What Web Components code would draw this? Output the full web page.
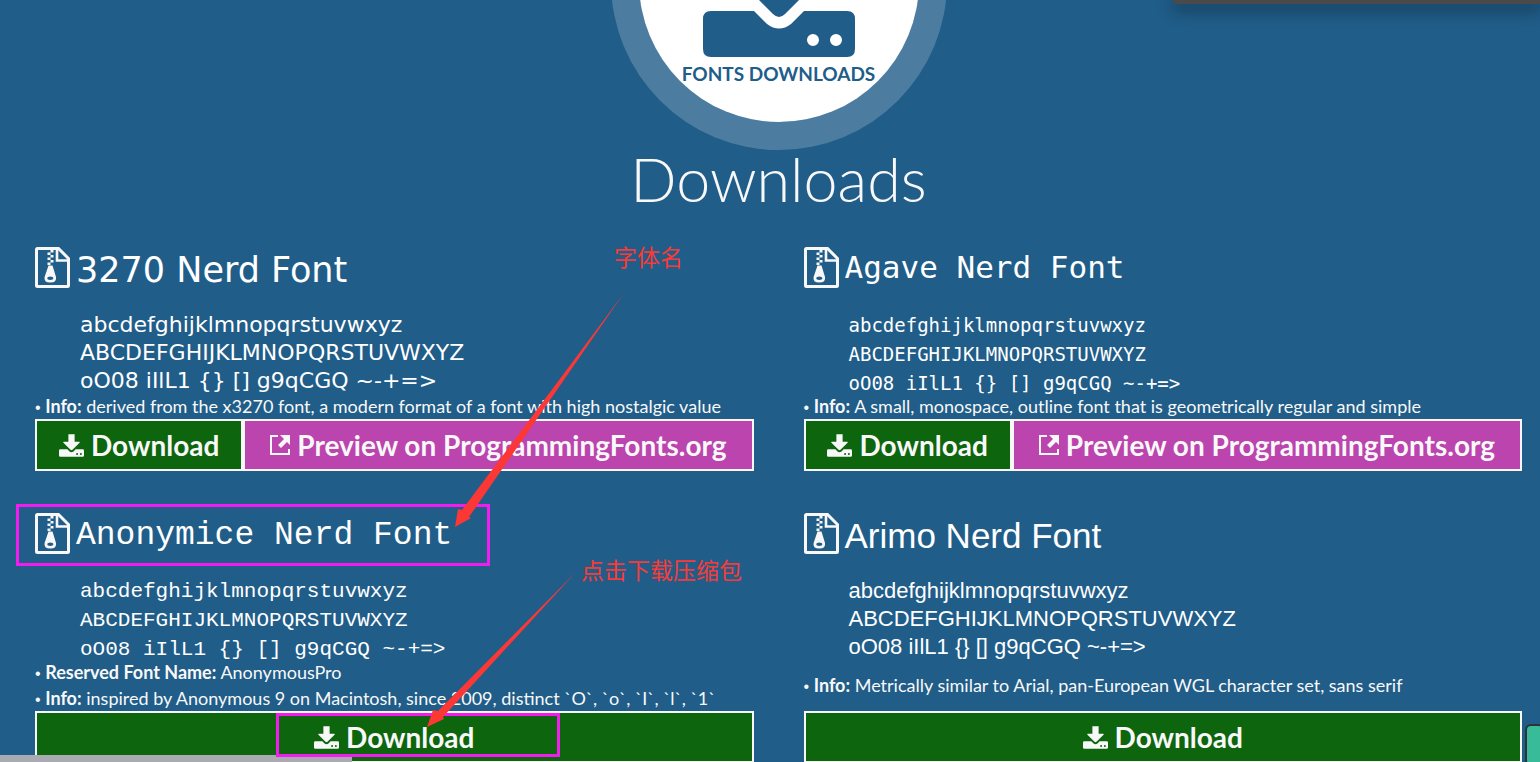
<!DOCTYPE html>
<html lang="en">
<head>
<meta charset="utf-8">
<title>Fonts Downloads</title>
<style>
  html { overflow: hidden; }
  body {
    margin: 0;
    min-height: 100vh;
    background: #205d89;
    color: #f8f8f8;
    font-family: Lato, "Noto Sans", sans-serif;
  }
</style>
</head>
<body>
<downloads-page></downloads-page>

<script>
const downloadIcon = `
  <svg viewBox="0 0 152 138" fill="currentColor" aria-hidden="true">
    <path d="M57 0H95V46H122Q130 46 125 52L82 95Q76 101 70 95L27 52Q22 46 30 46H57Z"/>
    <path fill-rule="evenodd" d="M8 92H51L64 105Q76 114 88 105L101 92H144Q152 92 152 100V130Q152 138 144 138H8Q0 138 0 130V100Q0 92 8 92ZM104 121A6 6 0 1 0 116 121A6 6 0 1 0 104 121ZM127 121A6 6 0 1 0 139 121A6 6 0 1 0 127 121Z"/>
  </svg>`;

const define = (name, html) => {
  const template = document.createElement('template');
  template.innerHTML = html;
  customElements.define(name, class extends HTMLElement {
    constructor() {
      super();
      this.attachShadow({ mode: 'open' }).append(template.content.cloneNode(true));
    }
  });
};

define('hero-badge', `
  <style>
    :host {
      box-sizing: border-box;
      width: 336px; height: 336px;
      margin-top: -186px;
      padding-bottom: 36px;
      border: 28px solid rgba(255,255,255,.2);
      border-radius: 50%;
      background: #fff padding-box;
      color: #205d89;
      display: flex; flex-direction: column; align-items: center; justify-content: flex-end;
      gap: 5px;
    }
    svg { width: 152px; height: 138px; }
    span { font-size: 19px; line-height: 24px; font-weight: 700; white-space: nowrap; }
  </style>
  ${downloadIcon}
  <span><slot></slot></span>`);

define('action-link', `
  <style>
    :host { display: block; flex: 1 1 0; min-width: 0; }
    :host([kind="download"]) { flex-grow: 29; }
    :host([kind="preview"]) { flex-grow: 71; }
    a {
      box-sizing: border-box;
      height: 52px;
      border: 2px solid #f8f8f8;
      background: #0d650d;
      color: #f8f8f8;
      font-size: 28px; font-weight: 700; line-height: 46px;
      text-decoration: none; white-space: nowrap;
      display: flex; align-items: center; justify-content: center; gap: 7px;
    }
    :host([kind="preview"]) a { background: #bb44ae; }
    svg { flex: none; }
    .download svg { width: 25px; height: 23px; }
    .preview, .download { display: none; }
    :host([kind="preview"]) .preview, :host([kind="download"]) .download { display: flex; }
  </style>
  <a href="#">
    <span class="download">${downloadIcon}</span>
    <span class="preview"><svg width="20" height="20" viewBox="0 0 20 20" aria-hidden="true">
      <path d="M6 1H1V19H19V14M6 1H8" fill="none" stroke="currentColor" stroke-width="2"/>
      <path d="M10 0H20V10L17 7L11 13L8 10L14 4Z" fill="currentColor"/>
    </svg></span>
    <slot></slot>
  </a>`);

define('font-card', `
  <style>
    :host { display: flex; flex-direction: column; min-width: 0; }
    header { display: flex; align-items: flex-start; gap: 6px; height: 40px; }
    header svg { flex: none; width: 35px; height: 41px; }
    h3 {
      margin: 0; color: #fff;
      font-family: var(--face); font-size: var(--title-size); font-weight: 400;
      line-height: var(--title-line); white-space: nowrap;
    }
    .sample {
      margin: 24px 0 0; padding-left: 45px; height: 82px; color: #fff;
      font-family: var(--face); font-size: var(--sample-size); line-height: var(--sample-line);
      white-space: pre;
    }
    .notes { flex: 1; display: flex; flex-direction: column; justify-content: center; }
    nav { display: flex; }
  </style>
  <header>
    <svg viewBox="0 0 35 41" aria-hidden="true">
      <path d="M2.500 1.500H23.500L33.500 11.500V38.500Q33.500 39.500 32.500 39.500H2.500Q1.500 39.500 1.500 38.500V2.500Q1.500 1.500 2.500 1.500Z" fill="none" stroke="#f8f8f8" stroke-width="3"/>
      <path d="M22 2V13.500H33" fill="none" stroke="#f8f8f8" stroke-width="2.600"/>
      <path fill="#f8f8f8" d="M15.500 3h3v2.500h-3zM12.500 5.500h3v2.500h-3zM15.500 8h3v2.500h-3zM12.500 10.500h3v2.500h-3zM15.500 13h3v2.500h-3zM12.500 15.500h3v2.500h-3z"/>
      <path fill="#f8f8f8" fill-rule="evenodd" d="M13.500 18.500h4L21 30Q22 35.500 15.300 35.500Q8.500 35.500 9.600 30ZM12.300 31.200A3 1.700 0 1 0 18.300 31.200A3 1.700 0 1 0 12.300 31.200Z"/>
    </svg>
    <h3><slot name="title"></slot></h3>
  </header>
  <p class="sample">abcdefghijklmnopqrstuvwxyz
ABCDEFGHIJKLMNOPQRSTUVWXYZ
oO08 iIlL1 {} [] g9qCGQ ~-+=&gt;</p>
  <div class="notes" role="list"><slot name="note"></slot></div>
  <nav><slot></slot></nav>`);

define('font-note', `
  <style>
    :host { display: block; font-size: 18px; line-height: 26px; white-space: nowrap; }
    b { font-weight: 700; }
    .dot { font-family: "Liberation Sans", sans-serif; font-size: 16px; line-height: 1; }
  </style>
  <span class="dot">•</span> <b><slot name="label"></slot></b> <slot></slot>`);

define('corner-panel', `
  <style>
    :host {
      position: absolute; top: 0; right: 0; width: 367px; height: 4px;
      background: #4a4a4a; border-bottom-left-radius: 4px;
      box-shadow: 0 4px 16px 2px rgba(0,0,0,.45);
    }
  </style>`);

define('status-strip', `
  <style>:host { position: absolute; left: 0; bottom: 0; width: 352px; height: 7px; background: #a9aab2; }</style>`);

define('side-tab', `
  <style>
    :host {
      position: absolute; right: -4px; bottom: -4px; box-sizing: border-box;
      width: 19px; height: 42px;
      border: 2px solid #2c333c; border-radius: 6px; background: #38bb98;
    }
  </style>`);

define('markup-layer', `
  <style>
    :host { position: absolute; inset: 0; pointer-events: none; }
    svg { position: absolute; left: 0; top: 0; width: 800px; height: 762px; }
    p {
      position: absolute; margin: 0; white-space: nowrap; color: #f93a37;
      font: 23px/32px "Noto Sans CJK SC", sans-serif;
    }
    .name { left: 614px; top: 240px; }
    .get { left: 581px; top: 553px; }
  </style>
  <svg viewBox="0 0 800 762" aria-hidden="true">
    <g fill="none" stroke="#f31cee" stroke-width="3">
      <rect x="17.500" y="505.500" width="471" height="59"/>
      <rect x="277.500" y="714.500" width="281" height="41"/>
    </g>
    <g fill="#fb3836">
      <path d="M455 527L458 509L462 510L624 293L469 517L471 518Z"/>
      <path d="M427 727L433 710L438 711L576 572L443 717L444 719Z"/>
    </g>
  </svg>
  <p class="name" lang="zh">字体名</p>
  <p class="get" lang="zh">点击下载压缩包</p>`);

define('downloads-page', `
  <style>
    :host { display: block; position: relative; height: 100vh; overflow: hidden; }
    main { padding: 0 18px 0 35px; display: flex; flex-direction: column; align-items: center; }
    h2 { margin: 0 0 39px; font-size: 61px; line-height: 58px; font-weight: 300; }
    .grid { align-self: stretch; display: grid; grid-template-columns: 1fr 1fr; gap: 42px 50px; }
    .dejavu { --face: "DejaVu Sans", sans-serif; --title-size: 35px; --title-line: 46px; --sample-size: 22px; --sample-line: 28px; }
    .agave { --face: "DejaVu Sans Mono", monospace; --title-size: 31px; --title-line: 40px; --sample-size: 19px; --sample-line: 29px; }
    .anon { --face: "Liberation Mono", monospace; --title-size: 33px; --title-line: 46px; --sample-size: 21px; --sample-line: 29px; }
    .arimo { --face: "Liberation Sans", sans-serif; --title-size: 35px; --title-line: 46px; --sample-size: 22px; --sample-line: 28px; }
  </style>
  <main>
    <hero-badge>FONTS DOWNLOADS</hero-badge>
    <h2>Downloads</h2>
    <div class="grid">
      <font-card class="dejavu">
        <span slot="title">3270 Nerd Font</span>
        <font-note slot="note" role="listitem"><span slot="label">Info:</span>derived from the x3270 font, a modern format of a font with high nostalgic value</font-note>
        <action-link kind="download">Download</action-link>
        <action-link kind="preview">Preview on ProgrammingFonts.org</action-link>
      </font-card>
      <font-card class="agave">
        <span slot="title">Agave Nerd Font</span>
        <font-note slot="note" role="listitem"><span slot="label">Info:</span>A small, monospace, outline font that is geometrically regular and simple</font-note>
        <action-link kind="download">Download</action-link>
        <action-link kind="preview">Preview on ProgrammingFonts.org</action-link>
      </font-card>
      <font-card class="anon">
        <span slot="title">Anonymice Nerd Font</span>
        <font-note slot="note" role="listitem"><span slot="label">Reserved Font Name:</span>AnonymousPro</font-note>
        <font-note slot="note" role="listitem"><span slot="label">Info:</span>inspired by Anonymous 9 on Macintosh, since 2009, distinct \`O\`, \`o\`, \`I\`, \`l\`, \`1\`</font-note>
        <action-link kind="download">Download</action-link>
      </font-card>
      <font-card class="arimo">
        <span slot="title">Arimo Nerd Font</span>
        <font-note slot="note" role="listitem"><span slot="label">Info:</span>Metrically similar to Arial, pan-European WGL character set, sans serif</font-note>
        <action-link kind="download">Download</action-link>
      </font-card>
    </div>
  </main>
  <corner-panel></corner-panel>
  <status-strip></status-strip>
  <side-tab></side-tab>
  <markup-layer></markup-layer>`);
</script>
</body>
</html>
